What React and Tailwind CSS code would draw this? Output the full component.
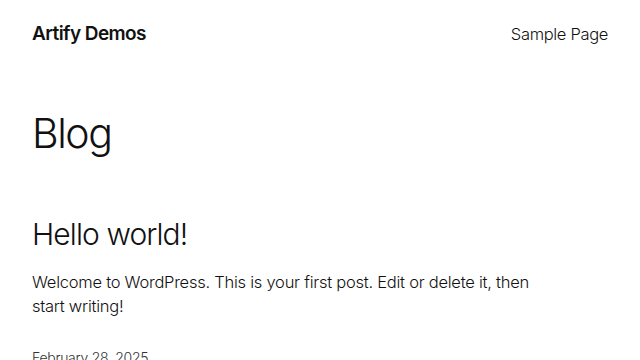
import React from 'react';

const App = () => {
  return (
    <div className="min-h-screen w-full bg-white text-[#111111]" style={{ fontFamily: 'Inter, "Noto Sans", sans-serif' }}>
      {/* Header */}
      <header className="flex items-center justify-between px-8 pt-[21px]">
        <a href="#" className="text-[19px] font-semibold tracking-[-0.03em] leading-[26px]">Artify Demos</a>
        <nav>
          <a href="#" className="text-[16.5px] font-light tracking-[-0.02em] leading-[26px]">Sample Page</a>
        </nav>
      </header>

      <main className="px-8">
        <h1 className="mt-[62px] text-[41px] font-light tracking-[-0.035em] leading-[1.2]">Blog</h1>

        <article className="mt-[58px]">
          <h2 className="text-[30px] font-light tracking-[-0.03em] leading-[1.2]">Hello world!</h2>
          <p className="mt-[18px] max-w-[510px] text-[16.5px] font-light tracking-[-0.015em] leading-[24px]">
            Welcome to WordPress. This is your first post. Edit or delete it, then start writing!
          </p>
          <p className="mt-[29px] text-[14px] font-light tracking-[-0.02em] text-[#333333]">February 28, 2025</p>
        </article>
      </main>
    </div>
  );
};

export default App;
